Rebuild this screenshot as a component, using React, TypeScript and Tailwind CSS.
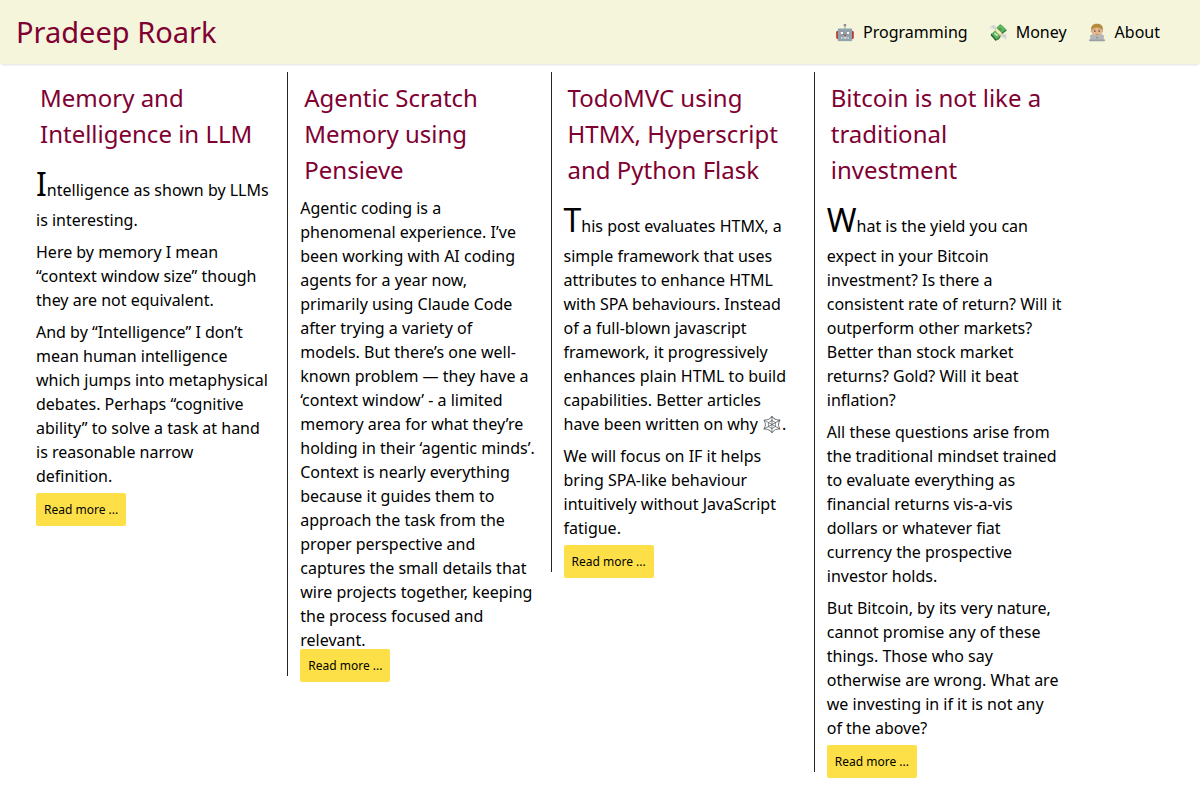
import React from 'react';

interface Post {
  title: string;
  paragraphs: string[];
  dropCap: boolean;
}

const CoderIcon: React.FC = () => (
  <svg className="w-5 h-5" viewBox="0 0 20 20" fill="none" aria-hidden="true">
    <path d="M3 15c0-2 2-3 4-3.200h6c2 .2 4 1.200 4 3.200z" fill="#9fb3bd" />
    <path d="M4.300 8.200C3.600 4.200 5.600 1.700 10 1.700s6.400 2.500 5.700 6.500l-.9 2.300H5.200z" fill="#b48a3c" />
    <ellipse cx="4.900" cy="8.900" rx="1.100" ry="1.500" fill="#dba882" />
    <ellipse cx="15.100" cy="8.900" rx="1.100" ry="1.500" fill="#dba882" />
    <path d="M5.200 7.200C6.500 6.600 8 5.500 10 5.500s3.500 1.100 4.800 1.700v3c0 3-2.200 4.800-4.800 4.800s-4.800-1.800-4.800-4.800z" fill="#e3b791" />
    <circle cx="7.800" cy="9.200" r=".8" fill="#5b4637" />
    <circle cx="12.200" cy="9.200" r=".8" fill="#5b4637" />
    <path d="M6.700 7.700h2M11.300 7.700h2" stroke="#a4793a" strokeWidth=".6" />
    <path d="M8.800 12.300c.7.500 1.700.5 2.400 0" stroke="#a05a44" strokeWidth=".6" />
    <rect x="3.200" y="13.200" width="13.600" height="5.600" rx=".7" fill="#b4b7ba" />
    <path d="M2 17.600h16v.9a.8.800 0 0 1-.8.800H2.800a.8.800 0 0 1-.8-.8z" fill="#9a9ea2" />
    <circle cx="10" cy="15.700" r=".8" fill="#7b7f83" />
  </svg>
);

const navItems: { icon: React.ReactNode; label: string }[] = [
  { icon: '🤖', label: 'Programming' },
  { icon: '💸', label: 'Money' },
  { icon: <CoderIcon />, label: 'About' },
];

const posts: Post[] = [
  {
    title: 'Memory and Intelligence in LLM',
    dropCap: true,
    paragraphs: [
      'Intelligence as shown by LLMs is interesting.',
      'Here by memory I mean “context window size” though they are not equivalent.',
      'And by “Intelligence” I don’t mean human intelligence which jumps into metaphysical debates. Perhaps “cognitive ability” to solve a task at hand is reasonable narrow definition.',
    ],
  },
  {
    title: 'Agentic Scratch Memory using Pensieve',
    dropCap: false,
    paragraphs: [
      'Agentic coding is a phenomenal experience. I’ve been working with AI coding agents for a year now, primarily using Claude Code after trying a variety of models. But there’s one well-known problem — they have a ‘context window’ - a limited memory area for what they’re holding in their ‘agentic minds’. Context is nearly everything because it guides them to approach the task from the proper perspective and captures the small details that wire projects together, keeping the process focused and relevant.',
    ],
  },
  {
    title: 'TodoMVC using HTMX, Hyperscript and Python Flask',
    dropCap: true,
    paragraphs: [
      'This post evaluates HTMX, a simple framework that uses attributes to enhance HTML with SPA behaviours. Instead of a full-blown javascript framework, it progressively enhances plain HTML to build capabilities. Better articles have been written on why 🕸️.',
      'We will focus on IF it helps bring SPA-like behaviour intuitively without JavaScript fatigue.',
    ],
  },
  {
    title: 'Bitcoin is not like a traditional investment',
    dropCap: true,
    paragraphs: [
      'What is the yield you can expect in your Bitcoin investment? Is there a consistent rate of return? Will it outperform other markets? Better than stock market returns? Gold? Will it beat inflation?',
      'All these questions arise from the traditional mindset trained to evaluate everything as financial returns vis-a-vis dollars or whatever fiat currency the prospective investor holds.',
      'But Bitcoin, by its very nature, cannot promise any of these things. Those who say otherwise are wrong. What are we investing in if it is not any of the above?',
    ],
  },
];

const Header: React.FC = () => (
  <header className="flex items-center justify-between h-16 pl-4 pr-10 bg-[#f5f5dc] rounded-b shadow-sm">
    <a href="#" className="text-[29px] text-[#800032]">Pradeep Roark</a>
    <nav className="flex gap-5">
      {navItems.map(item => (
        <a key={item.label} href="#" className="flex items-center gap-2">
          <span>{item.icon}</span>
          <span>{item.label}</span>
        </a>
      ))}
    </nav>
  </header>
);

const PostColumn: React.FC<{ post: Post }> = ({ post }) => (
  <article className="pl-3 pr-[15px] pt-2 border-l border-[#212529] first:border-l-0">
    <h2 className="px-1 pb-2 text-2xl leading-9 text-[#800032]">
      <a href="#">{post.title}</a>
    </h2>
    {post.paragraphs.map((text, idx) => (
      <p
        key={idx}
        className={`${post.dropCap ? 'mb-2' : ''} ${
          post.dropCap && idx === 0 ? 'first-letter:text-[32px] first-letter:leading-[48px]' : ''
        }`}
      >
        {text}
      </p>
    ))}
    <a href="#" className="p-2 text-xs rounded-xs bg-[#fde047]">Read more ...</a>
  </article>
);

const App: React.FC = () => (
  <div className="min-h-screen bg-white text-black font-['Noto_Sans',sans-serif]">
    <Header />
    <main className="grid grid-cols-1 sm:grid-cols-2 lg:grid-cols-4 items-start max-w-[1077px] pl-6 pt-2 pb-6">
      {posts.map(post => <PostColumn key={post.title} post={post} />)}
    </main>
  </div>
);

export default App;
